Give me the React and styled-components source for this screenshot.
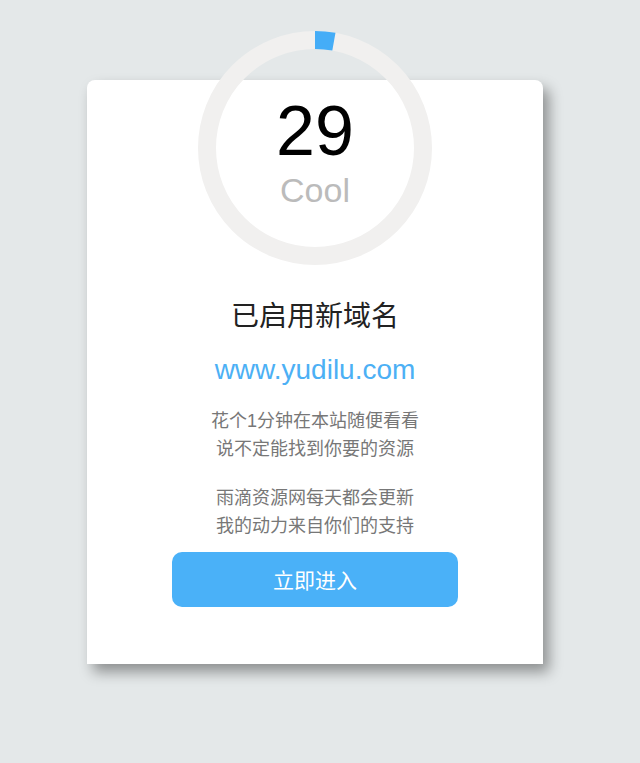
import React from "react";
import styled, { createGlobalStyle } from "styled-components";

const GlobalStyle = createGlobalStyle`
  html, body {
    margin: 0;
    padding: 0;
    background: #e4e8e9;
    font-family: "Liberation Sans", Arial, "Noto Sans CJK SC", sans-serif;
  }
`;

const Page = styled.div`
  min-height: 763px;
  padding: 80px 0 0 87px;
  box-sizing: border-box;
`;

const Card = styled.div`
  width: 456px;
  height: 584px;
  background: #fff;
  border-radius: 8px 8px 0 0;
  box-shadow: 6px 8px 14px rgba(0, 0, 0, 0.38);
  display: flex;
  flex-direction: column;
  align-items: center;
`;

const Dial = styled.div`
  position: relative;
  width: 234px;
  height: 234px;
  margin-top: -49px;
  box-sizing: border-box;
  border: 18px solid #f1f0ef;
  border-radius: 50%;
  display: flex;
  flex-direction: column;
  align-items: center;
  padding-top: 47px;
`;

const Arc = styled.svg`
  position: absolute;
  left: -18px;
  top: -18px;
  width: 234px;
  height: 234px;
`;

const Count = styled.div`
  font-size: 70px;
  line-height: 1;
  color: #000;
`;

const Label = styled.div`
  margin-top: 7px;
  font-size: 34px;
  line-height: 1;
  color: #bbb;
`;

const Title = styled.h1`
  margin: 34px 0 0;
  font-size: 28px;
  font-weight: normal;
  line-height: 1.3;
  color: #222;
`;

const Domain = styled.a`
  margin-top: 17px;
  font-size: 28px;
  line-height: 1.3;
  color: #4cb0f5;
  text-decoration: none;
`;

const Note = styled.p`
  margin: ${(p) => p.$top}px 0 0;
  font-size: 18px;
  line-height: 28px;
  color: #777;
  text-align: center;
`;

const EnterButton = styled.button`
  margin-top: 12px;
  width: 286px;
  height: 55px;
  border: none;
  border-radius: 10px;
  background: #4ab1f8;
  color: #fff;
  font-family: inherit;
  font-size: 21px;
  cursor: pointer;
`;

function ProgressArc({ days }) {
  const r = 108;
  const c = 117;
  const angle = (days / 290) * 2 * Math.PI * 0.28;
  const x = c + r * Math.sin(angle);
  const y = c - r * Math.cos(angle);
  return (
    <Arc viewBox="0 0 234 234">
      <path
        d={`M ${c} ${c - r} A ${r} ${r} 0 0 1 ${x.toFixed(2)} ${y.toFixed(2)}`}
        fill="none"
        stroke="#45adf7"
        strokeWidth="18"
      />
    </Arc>
  );
}

export default function App() {
  return (
    <>
      <GlobalStyle />
      <Page>
        <Card>
          <Dial>
            <ProgressArc days={29} />
            <Count>29</Count>
            <Label>Cool</Label>
          </Dial>
          <Title>已启用新域名</Title>
          <Domain href="#">www.yudilu.com</Domain>
          <Note $top={18}>
            花个1分钟在本站随便看看
            <br />
            说不定能找到你要的资源
          </Note>
          <Note $top={21}>
            雨滴资源网每天都会更新
            <br />
            我的动力来自你们的支持
          </Note>
          <EnterButton>立即进入</EnterButton>
        </Card>
      </Page>
    </>
  );
}
